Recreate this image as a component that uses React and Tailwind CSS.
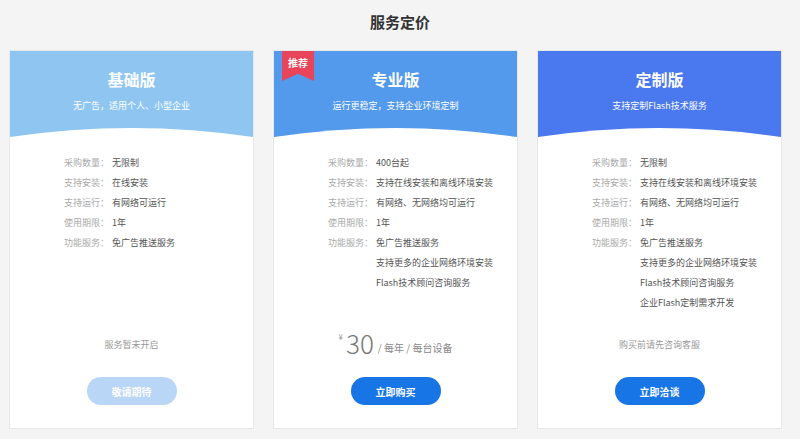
import React from 'react';

const plans = [
  {
    name: '基础版',
    desc: '无广告，适用个人、小型企业',
    color: 'bg-[#8ec6f1]',
    rows: [
      ['采购数量：', '无限制'],
      ['支持安装：', '在线安装'],
      ['支持运行：', '有网络可运行'],
      ['使用期限：', '1年'],
      ['功能服务：', '免广告推送服务'],
    ],
    extra: [],
    note: '服务暂未开启',
    btn: '敬请期待',
    btnClass: 'bg-[#b9d6f6]',
  },
  {
    name: '专业版',
    desc: '运行更稳定，支持企业环境定制',
    color: 'bg-[#5399ec]',
    badge: true,
    rows: [
      ['采购数量：', '400台起'],
      ['支持安装：', '支持在线安装和离线环境安装'],
      ['支持运行：', '有网络、无网络均可运行'],
      ['使用期限：', '1年'],
      ['功能服务：', '免广告推送服务'],
    ],
    extra: ['支持更多的企业网络环境安装', 'Flash技术顾问咨询服务'],
    price: true,
    btn: '立即购买',
    btnClass: 'bg-[#1875e6]',
  },
  {
    name: '定制版',
    desc: '支持定制Flash技术服务',
    color: 'bg-[#4a78ee]',
    rows: [
      ['采购数量：', '无限制'],
      ['支持安装：', '支持在线安装和离线环境安装'],
      ['支持运行：', '有网络、无网络均可运行'],
      ['使用期限：', '1年'],
      ['功能服务：', '免广告推送服务'],
    ],
    extra: ['支持更多的企业网络环境安装', 'Flash技术顾问咨询服务', '企业Flash定制需求开发'],
    note: '购买前请先咨询客服',
    btn: '立即洽谈',
    btnClass: 'bg-[#1875e6]',
  },
];

function Card({ plan }) {
  return (
    <div className="relative flex h-[379px] w-[245px] flex-col border border-[#e8e8e8] bg-white">
      {plan.badge && (
        <div className="absolute left-[8px] top-0 z-10 h-[30px] w-[32px] bg-[#e8445a] pt-[5px] text-center text-[10px] font-bold leading-[14px] text-white [clip-path:polygon(0_0,100%_0,100%_100%,50%_76%,0_100%)]">
          推荐
        </div>
      )}
      <div className={`flex h-[86px] flex-col ${plan.color}`}>
        <div className="flex-1 pt-[17px] text-center text-white">
          <div className="text-[16px] font-bold leading-[22px]">{plan.name}</div>
          <div className="mt-[9px] text-[9px] leading-[14px]">{plan.desc}</div>
        </div>
        <svg className="block h-[10px] w-full" viewBox="0 0 245 10" preserveAspectRatio="none">
          <path d="M0 10 Q122.5 -8 245 10 Z" fill="#fff" />
        </svg>
      </div>
      <div className="flex-1 pl-[54px] pt-[16px] text-[9px] leading-[20px]">
        {plan.rows.map(([k, v]) => (
          <div key={k} className="flex">
            <span className="w-[48px] text-[#aaa]">{k}</span>
            <span className="text-[#555]">{v}</span>
          </div>
        ))}
        {plan.extra.map((t) => (
          <div key={t} className="pl-[48px] text-[#555]">{t}</div>
        ))}
      </div>
      <div className="flex flex-col items-center pb-[23px]">
        {plan.price ? (
          <div className="flex h-[20px] items-end text-[#888]">
            <span className="mb-[14px] mr-[3px] text-[8px] leading-none text-[#999]">¥</span>
            <span className="mb-[-1px] text-[26px] font-light leading-none text-[#777]">30</span>
            <span className="ml-[4px] text-[10px] leading-[14px]">/ 每年 / 每台设备</span>
          </div>
        ) : (
          <div className="h-[20px] text-[9px] leading-[20px] text-[#999]">{plan.note}</div>
        )}
        <button className={`mt-[22px] h-[28px] w-[90px] rounded-full text-[10px] font-bold text-white ${plan.btnClass}`}>
          {plan.btn}
        </button>
      </div>
    </div>
  );
}

export default function App() {
  return (
    <div
      className="h-[439px] w-[800px] overflow-hidden bg-[#f4f4f4] pt-[12px]"
      style={{ fontFamily: '"Noto Sans CJK SC", "Noto Sans", sans-serif' }}
    >
      <h1 className="text-center text-[15px] font-bold leading-[20px] text-[#333]">服务定价</h1>
      <div className="mt-[18px] flex gap-[19px] pl-[9px]">
        {plans.map((p) => (
          <Card key={p.name} plan={p} />
        ))}
      </div>
    </div>
  );
}
